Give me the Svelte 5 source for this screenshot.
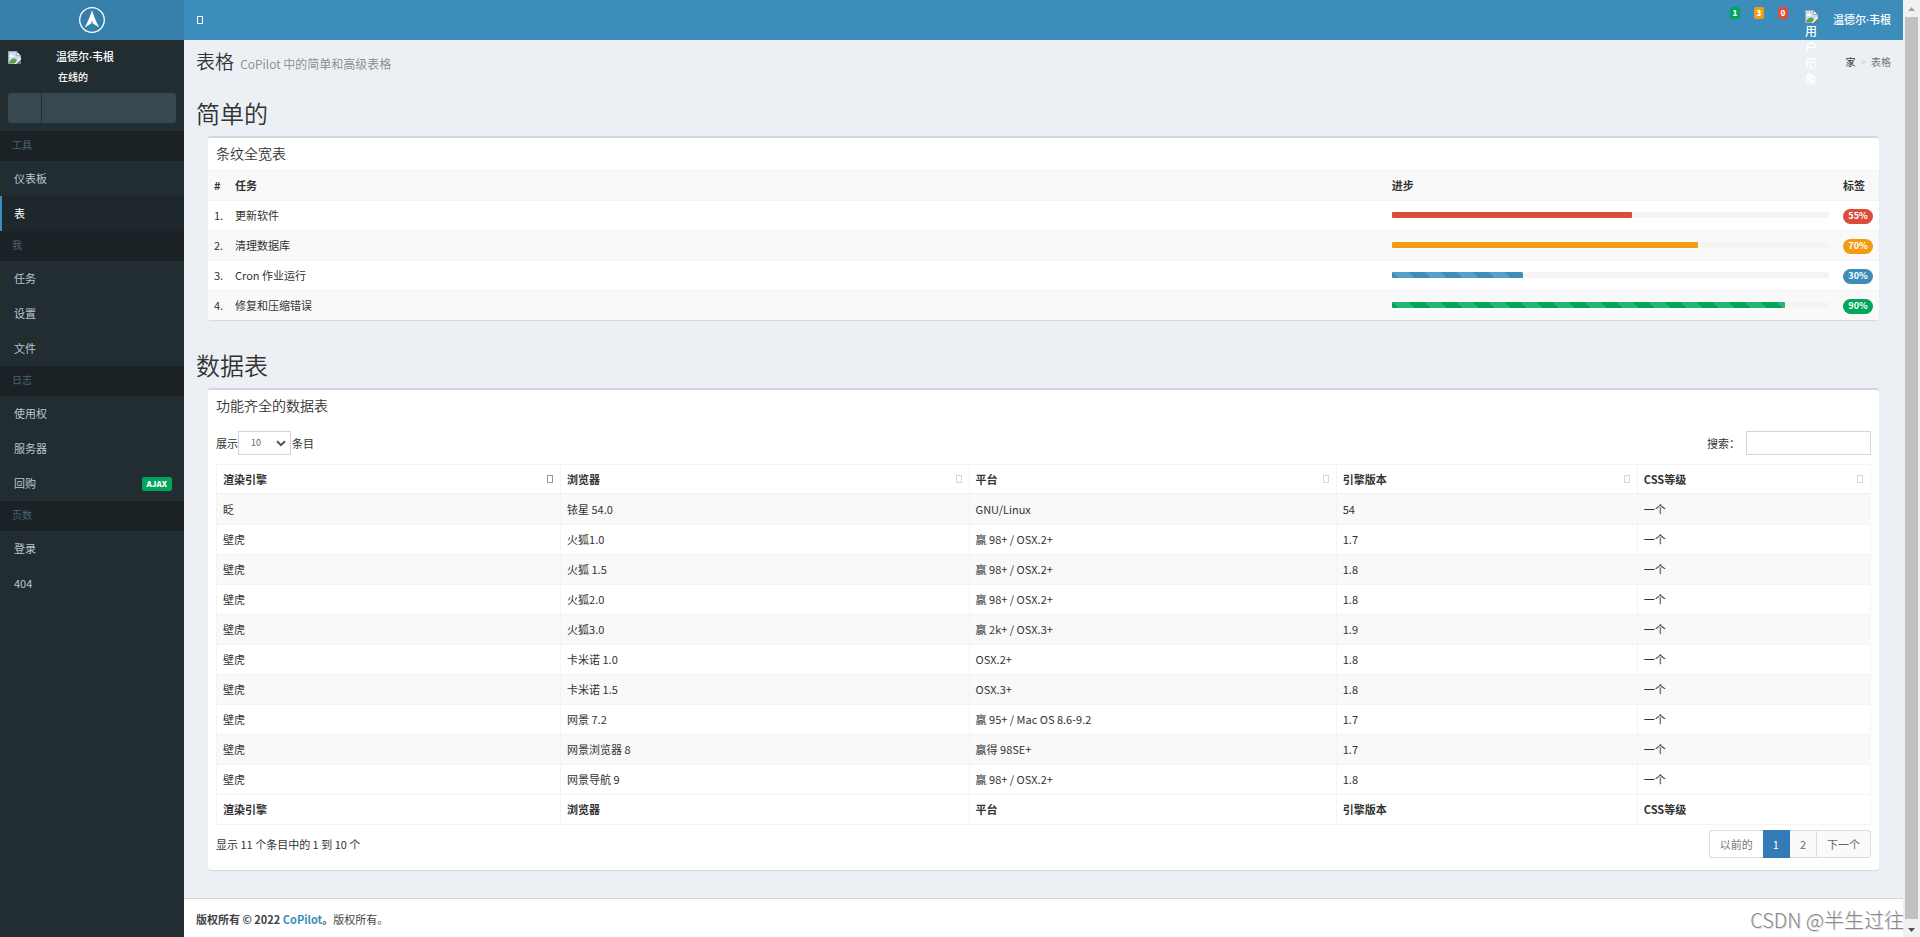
<script lang="ts">
  const menu = [
    { title: "工具", items: [{ label: "仪表板" }, { label: "表", active: true }] },
    { title: "我", items: [{ label: "任务" }, { label: "设置" }, { label: "文件" }] },
    {
      title: "日志",
      items: [{ label: "使用权" }, { label: "服务器" }, { label: "回购", badge: "AJAX" }],
    },
    { title: "页数", items: [{ label: "登录" }, { label: "404" }] },
  ];

  const notices = [
    { count: 1, color: "green", label: "消息" },
    { count: 3, color: "yellow", label: "通知" },
    { count: 0, color: "red", label: "任务" },
  ];

  const tasks = [
    { name: "更新软件", value: 55, color: "red", striped: false },
    { name: "清理数据库", value: 70, color: "yellow", striped: false },
    { name: "Cron 作业运行", value: 30, color: "blue", striped: true },
    { name: "修复和压缩错误", value: 90, color: "green", striped: true },
  ];

  const columns = ["渲染引擎", "浏览器", "平台", "引擎版本", "CSS等级"];

  const rows = [
    ["眨", "铱星 54.0", "GNU/Linux", "54", "一个"],
    ["壁虎", "火狐1.0", "赢 98+ / OSX.2+", "1.7", "一个"],
    ["壁虎", "火狐 1.5", "赢 98+ / OSX.2+", "1.8", "一个"],
    ["壁虎", "火狐2.0", "赢 98+ / OSX.2+", "1.8", "一个"],
    ["壁虎", "火狐3.0", "赢 2k+ / OSX.3+", "1.9", "一个"],
    ["壁虎", "卡米诺 1.0", "OSX.2+", "1.8", "一个"],
    ["壁虎", "卡米诺 1.5", "OSX.3+", "1.8", "一个"],
    ["壁虎", "网景 7.2", "赢 95+ / Mac OS 8.6-9.2", "1.7", "一个"],
    ["壁虎", "网景浏览器 8", "赢得 98SE+", "1.7", "一个"],
    ["壁虎", "网景导航 9", "赢 98+ / OSX.2+", "1.8", "一个"],
  ];

  let sorted = $state(0);
  let page = $state(1);
  let pageSize = $state("10");
  let search = $state("");
</script>

{#snippet brokenImage()}
  <svg class="broken" viewBox="0 0 13 13" width="13" height="13">
    <path d="M0.5 0.5h8l4 4v8h-12z" fill="#c9daf8" stroke="#a5a9ae" />
    <path d="M2 5.5a1.5 1.5 0 0 1 3-.8 1.2 1.2 0 0 1 1.5 1.3h-4.5z" fill="#fff" />
    <path d="M1 12c1-3 3-4.5 5-4.5s3 1.500 3.500 4.500z" fill="#55a63a" />
    <path d="M8.5 0.5v4h4z" fill="#fff" stroke="#a5a9ae" />
    <path d="M13 8v5h-5z" fill="#777" />
    <path d="M13 7l-6 6" stroke="#fff" stroke-width="1.3" />
  </svg>
{/snippet}

<div class="app">
  <aside class="sidebar">
    <a class="logo" href="#home" aria-label="CoPilot">
      <svg viewBox="0 0 28 28" width="28" height="28">
        <circle cx="14" cy="14" r="12.3" fill="none" stroke="#fff" stroke-width="1.3" />
        <path d="M14 4.300c1.500 5 4 11.500 7.300 17.200l-6.800-4.300v-2h-1v2l-6.800 4.300c3.300-5.700 5.800-12.200 7.300-17.200z" fill="#fff" />
      </svg>
    </a>
    <div class="user-panel">
      {@render brokenImage()}
      <div class="user-info">
        <strong>温德尔·韦根</strong>
        <a href="#status">在线的</a>
      </div>
    </div>
    <form class="sidebar-search">
      <button type="button" aria-label="搜索"></button>
      <input type="text" aria-label="搜索菜单" />
    </form>
    <nav>
      {#each menu as group}
        <h4>{group.title}</h4>
        {#each group.items as item}
          <a class="item" class:active={item.active} href="#{item.label}">
            <span>{item.label}</span>
            {#if item.badge}
              <span class="ajax">{item.badge}</span>
            {/if}
          </a>
        {/each}
      {/each}
    </nav>
  </aside>

  <div class="main">
    <header class="navbar">
      <button class="toggle" aria-label="切换导航"><i class="glyph"></i></button>
      <div class="nav-right">
        {#each notices as n}
          <a class="notice {n.color}" href="#notice-{n.color}" aria-label={n.label}>{n.count}</a>
        {/each}
        <a class="account" href="#account">
          <span class="avatar">{@render brokenImage()}<span>用户形象</span></span>
          <strong>温德尔·韦根</strong>
        </a>
      </div>
    </header>

    <div class="content">
      <div class="content-header">
        <h1>表格 <small>CoPilot 中的简单和高级表格</small></h1>
        <div class="breadcrumb">
          <a href="#home">家</a><span class="sep">&gt;</span><span>表格</span>
        </div>
      </div>

      <h2>简单的</h2>
      <section class="box">
        <h3>条纹全宽表</h3>
        <table class="tasks">
          <thead>
            <tr>
              <th class="num">#</th>
              <th>任务</th>
              <th class="progress-col">进步</th>
              <th class="label-col">标签</th>
            </tr>
          </thead>
          <tbody>
            {#each tasks as task, i}
              <tr>
                <td class="num">{i + 1}.</td>
                <td>{task.name}</td>
                <td>
                  <div class="progress">
                    <div class="bar {task.color}" class:striped={task.striped} style="width: {task.value}%"></div>
                  </div>
                </td>
                <td><span class="badge {task.color}">{task.value}%</span></td>
              </tr>
            {/each}
          </tbody>
        </table>
      </section>

      <h2>数据表</h2>
      <section class="box">
        <h3>功能齐全的数据表</h3>
        <div class="box-body">
          <div class="controls">
            <div class="length">
              <label for="length">展示</label>
              <span class="select">
                <select id="length" bind:value={pageSize}>
                  <option>10</option>
                  <option>25</option>
                  <option>50</option>
                  <option>100</option>
                </select>
                <svg viewBox="0 0 10 7" width="10" height="7">
                  <path d="M1 1.200l4 4 4-4" fill="none" stroke="#555" stroke-width="2" />
                </svg>
              </span>
              <span>条目</span>
            </div>
            <div class="filter">
              <label for="search">搜索：</label>
              <input id="search" type="search" bind:value={search} />
            </div>
          </div>

          <table class="data">
            <thead>
              <tr>
                {#each columns as col, i}
                  <th>
                    <button class:sorted={sorted === i} onclick={() => (sorted = i)}>
                      {col}<i class="glyph"></i>
                    </button>
                  </th>
                {/each}
              </tr>
            </thead>
            <tbody>
              {#each rows as row}
                <tr>
                  {#each row as cell}
                    <td>{cell}</td>
                  {/each}
                </tr>
              {/each}
            </tbody>
            <tfoot>
              <tr>
                {#each columns as col}
                  <th>{col}</th>
                {/each}
              </tr>
            </tfoot>
          </table>

          <div class="table-foot">
            <span>显示 11 个条目中的 1 到 10 个</span>
            <div class="pagination">
              <button class="prev" onclick={() => (page = 1)}>以前的</button>
              <button class:current={page === 1} onclick={() => (page = 1)}>1</button>
              <button class:current={page === 2} onclick={() => (page = 2)}>2</button>
              <button onclick={() => (page = 2)}>下一个</button>
            </div>
          </div>
        </div>
      </section>
    </div>

    <footer>
      <strong>版权所有 © 2022 <a href="#copilot">CoPilot</a>。</strong>版权所有。
    </footer>
  </div>

  <div class="scrollbar">
    <svg viewBox="0 0 17 17" width="17" height="17"><path d="M5 11h7l-3.500-4z" fill="#a3a3a3" /></svg>
    <div class="thumb"></div>
    <svg viewBox="0 0 17 17" width="17" height="17"><path d="M5 6h7l-3.500 4z" fill="#505050" /></svg>
  </div>
  <div class="watermark">CSDN @半生过往</div>
</div>

<style>
  :global(body) {
    margin: 0;
    font-family: "Noto Sans CJK SC", "Noto Sans", sans-serif;
    font-size: 11px;
    line-height: 16px;
    color: #333;
  }
  * {
    box-sizing: border-box;
  }
  button,
  input,
  select {
    font: inherit;
    color: inherit;
    margin: 0;
  }
  a {
    color: inherit;
    text-decoration: none;
  }
  h1,
  h2,
  h3,
  h4 {
    margin: 0;
    font-weight: 400;
  }
  .app {
    position: relative;
    display: flex;
    min-height: 100vh;
    background: #ecf0f5;
  }

  /* Sidebar */
  .sidebar {
    flex: 0 0 184px;
    background: #222d32;
    color: #b8c7ce;
  }
  .logo {
    display: flex;
    align-items: center;
    justify-content: center;
    height: 40px;
    background: #367fa9;
  }
  .user-panel {
    display: flex;
    gap: 35px;
    padding: 9px 8px 8px;
    color: #fff;
  }
  .user-panel .broken {
    margin-top: 2px;
  }
  .broken {
    flex: none;
    display: block;
  }
  .user-info {
    display: flex;
    flex-direction: column;
    gap: 4px;
  }
  /* Noto Sans first: its middle dot is narrow */
  .user-info strong,
  .account strong {
    font-family: "Noto Sans", "Noto Sans CJK SC", sans-serif;
    font-weight: 500;
  }
  .user-info a {
    padding-left: 2px;
    font-size: 10px;
    font-weight: 500;
  }
  .sidebar-search {
    display: flex;
    height: 30px;
    margin: 0 8px 8px;
    border-radius: 3px;
    overflow: hidden;
    background: #374850;
  }
  .sidebar-search button {
    width: 34px;
    border: 0;
    border-right: 1px solid #222d32;
    background: none;
  }
  .sidebar-search input {
    flex: 1;
    min-width: 0;
    border: 0;
    background: none;
  }
  nav h4 {
    padding: 4px 12px 6px;
    font-size: 10px;
    line-height: 20px;
    color: #4b646f;
    background: #1a2226;
  }
  .item {
    display: flex;
    align-items: center;
    justify-content: space-between;
    height: 35px;
    padding: 0 12px 2px;
    border-left: 2px solid transparent;
  }
  .item.active {
    color: #fff;
    background: #1e282c;
    border-left-color: #3c8dbc;
  }
  .ajax {
    padding: 0 5px;
    margin-top: 2px;
    border-radius: 2px;
    background: #00a65a;
    color: #fff;
    font-size: 8px;
    line-height: 14px;
    font-weight: 900;
  }

  /* Top bar */
  .main {
    flex: 1;
    min-width: 0;
    display: flex;
    flex-direction: column;
  }
  .navbar {
    display: flex;
    justify-content: space-between;
    height: 40px;
    padding: 0 12px;
    background: #3c8dbc;
    color: #fff;
  }
  .toggle {
    padding: 0 1px;
    border: 0;
    background: none;
    color: #fff;
  }
  .glyph {
    display: block;
    width: 6px;
    height: 8px;
    border: 1px solid currentColor;
  }
  .nav-right {
    display: flex;
    gap: 14px;
  }
  .notice {
    width: 10px;
    height: 12px;
    margin-top: 7px;
    border-radius: 2px;
    font-size: 8px;
    line-height: 12px;
    font-weight: 900;
    text-align: center;
  }
  .account {
    display: flex;
    gap: 8px;
    padding-left: 3px;
  }
  .account strong {
    line-height: 40px;
  }
  /* The alt text of the missing avatar runs past the bar */
  .avatar {
    width: 20px;
    height: 30px;
    padding-top: 10px;
    font-size: 12px;
    font-weight: 500;
  }
  .avatar span {
    display: block;
    width: 12px;
  }

  /* Content */
  .content {
    display: flex;
    flex-direction: column;
    padding: 12px 12px 24px;
  }
  .content-header {
    display: flex;
    justify-content: space-between;
    align-items: center;
    height: 20px;
  }
  h1 {
    font-size: 19px;
    line-height: 20px;
    font-weight: 350;
  }
  h1 small {
    margin-left: 2px;
    font-size: 12px;
    font-weight: 350;
    color: #888;
  }
  .breadcrumb {
    display: flex;
    gap: 5px;
    font-size: 10px;
    color: #777;
  }
  .breadcrumb a {
    color: #333;
  }
  .breadcrumb .sep {
    color: #ccc;
  }
  h2 {
    margin: 27px 0 9px;
    font-size: 24px;
    line-height: 28px;
    font-weight: 350;
  }
  .box {
    margin: 0 12px 4px;
    border-top: 2px solid #d2d6de;
    border-radius: 3px;
    background: #fff;
    box-shadow: 0 1px 1px rgba(0, 0, 0, 0.1);
  }
  h3 {
    padding: 4px 8px 6px;
    font-size: 14px;
    line-height: 22px;
    font-weight: 350;
  }
  table {
    width: 100%;
    border-spacing: 0;
  }
  th {
    font-weight: 700;
    text-align: left;
  }
  .green {
    background-color: #00a65a;
  }
  .yellow {
    background-color: #f39c12;
  }
  .red {
    background-color: #dd4b39;
  }
  .blue {
    background-color: #3c8dbc;
  }

  .tasks th,
  .tasks td {
    height: 30px;
    padding: 0 7px 2px;
    border-top: 1px solid #f4f4f4;
  }
  .tasks thead tr,
  .tasks tbody tr:nth-child(even) {
    background: #f9f9f9;
  }
  .tasks .num {
    width: 20px;
    padding: 0 0 2px 6px;
  }
  .tasks .progress-col {
    width: 27%;
  }
  .tasks .label-col {
    width: 43px;
    white-space: nowrap;
  }
  .tasks td:last-child {
    padding: 0 6px 0 7px;
  }
  .progress {
    height: 6px;
    border-radius: 1px;
    background: #f4f4f4;
  }
  .bar {
    height: 100%;
    border-radius: 1px;
  }
  .striped {
    background-image: linear-gradient(
      45deg,
      rgba(255, 255, 255, 0.15) 25%,
      transparent 25%,
      transparent 50%,
      rgba(255, 255, 255, 0.15) 50%,
      rgba(255, 255, 255, 0.15) 75%,
      transparent 75%
    );
    background-size: 32px 32px;
  }
  .badge {
    display: block;
    width: 30px;
    height: 15px;
    margin-top: 2px;
    border-radius: 8px;
    color: #fff;
    font-size: 9px;
    line-height: 13px;
    font-weight: 700;
    text-align: center;
  }

  /* Data table */
  .box-body {
    padding: 9px 8px 12px;
  }
  .controls {
    display: flex;
    justify-content: space-between;
    margin-bottom: 9px;
  }
  .length,
  .filter {
    display: flex;
    align-items: center;
  }
  .filter {
    gap: 6px;
  }
  .select {
    position: relative;
    margin-right: 1px;
  }
  .select select {
    display: block;
    width: 53px;
    height: 24px;
    padding: 0 12px;
    border: 1px solid #d2d6de;
    border-radius: 0;
    background: #fff;
    appearance: none;
    font-size: 9px;
    color: #666;
  }
  .select svg {
    position: absolute;
    right: 5px;
    top: 9px;
    pointer-events: none;
  }
  .filter input {
    width: 125px;
    height: 24px;
    padding: 0 8px;
    border: 1px solid #d2d6de;
    border-radius: 0;
    background: #fff;
  }
  .data {
    table-layout: fixed;
    border-top: 1px solid #f4f4f4;
    border-left: 1px solid #f4f4f4;
  }
  .data th,
  .data td {
    padding: 6px 7px 6px 6px;
    line-height: 17px;
    border-right: 1px solid #f4f4f4;
    border-bottom: 1px solid #f4f4f4;
  }
  .data thead th {
    line-height: 16px;
    border-bottom-width: 2px;
  }
  .data th:nth-child(1) {
    width: 20.8%;
  }
  .data th:nth-child(2) {
    width: 24.7%;
  }
  .data th:nth-child(3) {
    width: 22.2%;
  }
  .data th:nth-child(4) {
    width: 18.2%;
  }
  .data tbody tr:nth-child(odd) {
    background: #f9f9f9;
  }
  .data button {
    display: flex;
    align-items: center;
    justify-content: space-between;
    width: 100%;
    padding: 0;
    border: 0;
    background: none;
    font-weight: 700;
    cursor: pointer;
  }
  .data .glyph {
    color: #d6d6d6;
  }
  .data .sorted .glyph {
    color: #999;
  }
  .table-foot {
    display: flex;
    align-items: center;
    justify-content: space-between;
    margin-top: 5px;
  }
  .pagination {
    display: flex;
  }
  .pagination button {
    height: 28px;
    padding: 0 10px;
    border: 1px solid #ddd;
    border-left-width: 0;
    background: #fafafa;
    color: #666;
  }
  .pagination .prev {
    border-left-width: 1px;
    border-right-width: 0;
    border-radius: 3px 0 0 3px;
    background: #fff;
    color: #777;
  }
  .pagination button:last-child {
    border-radius: 0 3px 3px 0;
  }
  .pagination .current {
    border-color: #337ab7;
    background: #337ab7;
    color: #fff;
  }
  footer {
    flex: 1;
    padding: 12px;
    border-top: 1px solid #d2d6de;
    background: #fff;
    color: #444;
  }
  footer strong {
    font-weight: 700;
  }
  footer a {
    color: #3c8dbc;
  }

  .scrollbar {
    flex: 0 0 17px;
    display: flex;
    flex-direction: column;
    background: #f1f1f1;
  }
  .scrollbar svg {
    display: block;
  }
  .thumb {
    flex: 1;
    margin: 0 2px 3px;
    background: #c1c1c1;
  }
  .watermark {
    position: absolute;
    right: 16px;
    bottom: 6px;
    font-size: 20px;
    line-height: 26px;
    font-weight: 300;
    color: #888;
    text-shadow: 1px 1px 0 #ddd;
  }
</style>
